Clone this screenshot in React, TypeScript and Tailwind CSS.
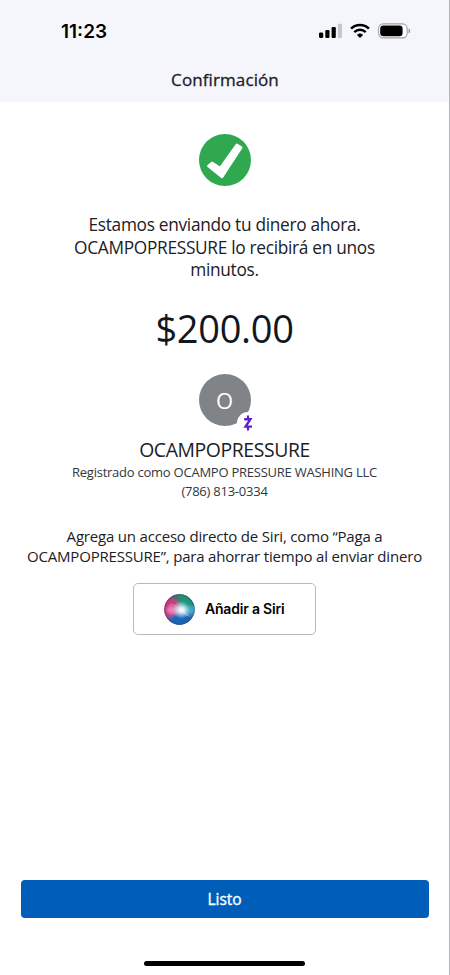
import React from 'react';

const StatusIcons: React.FC = () => (
    <div className="flex items-center pt-px">
        <svg width="24" height="16" viewBox="0 0 24 16">
            <rect x="0" y="9.6" width="4.2" height="5.4" rx="1.2" fill="#000" />
            <rect x="6.3" y="7" width="4.2" height="8" rx="1.2" fill="#000" />
            <rect x="12.6" y="4" width="4.2" height="11" rx="1.2" fill="#000" />
            <rect x="18.8" y="0.8" width="4.2" height="14.2" rx="1.2" fill="#c6c7ca" />
        </svg>
        <svg className="ml-[7px]" width="20" height="16" viewBox="0 0 20 16" fill="none" stroke="#000">
            <path d="M1.1 5.7a12.6 12.6 0 0 1 17.8 0" strokeWidth="2.6" />
            <path d="M4.3 9.1a8.2 8.2 0 0 1 11.4 0" strokeWidth="2.5" />
            <path d="M10 15L6.9 11.9a4.5 4.5 0 0 1 6.2 0z" fill="#000" stroke="none" />
        </svg>
        <svg className="ml-2" width="33" height="16" viewBox="0 0 33 16">
            <rect x="0.6" y="0.9" width="28.6" height="14" rx="4.6" fill="#fff" stroke="#a0a1a4" strokeWidth="1.1" />
            <rect x="2.2" y="2.5" width="22.4" height="10.8" rx="3.2" fill="#000" />
            <path d="M30.6 5.5c2 .6 2 4.2 0 4.8z" fill="#8e8f92" />
        </svg>
    </div>
);

const CheckBadge: React.FC = () => (
    <svg width="52" height="52" viewBox="0 0 52 52">
        <circle cx="26" cy="26" r="26" fill="#2fa84f" />
        <path
            d="M9.3 32L13 28.8L21.3 33.9L37.8 10.8L42.3 13.6L23 43z"
            fill="#fff"
            stroke="#fff"
            strokeWidth="2.4"
            strokeLinejoin="round"
        />
    </svg>
);

const ZelleMark: React.FC = () => (
    <svg width="20" height="20" viewBox="0 0 20 20" fill="none" stroke="#6420c8">
        <path d="M6.2 6.2H12.4L7.6 13.6H14" strokeWidth="2.4" />
        <path d="M10 2.6V6M10 14V17.6" strokeWidth="2.2" />
    </svg>
);

const SiriOrb: React.FC = () => (
    <svg width="31" height="31" viewBox="0 0 31 31">
        <defs>
            <radialGradient id="glow">
                <stop offset="0" stopColor="#fff" />
                <stop offset=".3" stopColor="#f1fbff" stopOpacity=".85" />
                <stop offset="1" stopColor="#bfe6ff" stopOpacity="0" />
            </radialGradient>
            <radialGradient id="rim">
                <stop offset=".85" stopColor="#283458" stopOpacity="0" />
                <stop offset="1" stopColor="#283458" stopOpacity=".4" />
            </radialGradient>
            <filter id="soft" x="-30%" y="-30%" width="160%" height="160%">
                <feGaussianBlur stdDeviation="1.6" />
            </filter>
            <clipPath id="orb">
                <circle cx="15.5" cy="15.5" r="15.2" />
            </clipPath>
        </defs>
        <g clipPath="url(#orb)">
            <rect width="31" height="31" fill="#4a5a94" />
            <g filter="url(#soft)">
                <path d="M6 -4H35V15L16 15z" fill="#1f957a" />
                <path d="M-4 5L10 2L16 14L10 23L-4 24z" fill="#d0387f" />
                <path d="M5 24L15 17L28 20L24 35H8z" fill="#1d66b8" />
                <path d="M17 13L35 12V21L20 20z" fill="#45aacb" />
                <ellipse cx="9" cy="16" rx="6" ry="4" fill="#e884b9" />
                <ellipse cx="12" cy="4" rx="5" ry="3" fill="#56656f" />
            </g>
            <path d="M5 12C10 8 13 13 17 16S25 23 27 22" fill="none" stroke="#fff" strokeOpacity=".25" />
            <circle cx="17.5" cy="16" r="9" fill="url(#glow)" />
            <path d="M18 16L24 22" stroke="#fff" strokeOpacity=".4" />
            <circle cx="15.5" cy="15.5" r="15.2" fill="url(#rim)" />
        </g>
    </svg>
);

const App: React.FC = () => (
    <div className="flex h-[975px] w-[450px] flex-col border-r border-[#b4b5b8] bg-white font-['Open_Sans',sans-serif] text-[#1b2026]">
        <header className="h-[102px] bg-[#f4f6fb]">
            <div className="flex h-[60px] items-center justify-between pr-[38px] pl-[61px]">
                <span className="pt-[5px] font-['Inter',sans-serif] text-[19px] font-semibold text-black">11:23</span>
                <StatusIcons />
            </div>
            <h1 className="pl-px text-center text-[17px] leading-[40px] tracking-[0.1px] [-webkit-text-stroke:0.3px]">
                Confirmación
            </h1>
        </header>

        <main className="flex flex-1 flex-col items-center text-center whitespace-nowrap">
            <div className="mt-8">
                <CheckBadge />
            </div>
            <p className="mt-7 text-[17.3px] leading-[22.7px] tracking-[-0.3px]">
                Estamos enviando tu dinero ahora.
                <br />
                OCAMPOPRESSURE lo recibirá en unos
                <br />
                minutos.
            </p>
            <div className="mt-[21px] text-[38px] leading-[50px] tracking-[-0.3px] text-[#10171e]">$200.00</div>

            <div className="relative mt-[21px] flex size-[52px] items-center justify-center rounded-full bg-[#808486] text-[22px] text-white">
                O
                <div className="absolute top-[38px] left-[38px] flex size-[22px] items-center justify-center rounded-full bg-white">
                    <ZelleMark />
                </div>
            </div>

            <h2 className="mt-[11px] text-[19.4px] leading-[26px] tracking-[-0.4px]">OCAMPOPRESSURE</h2>
            <p className="text-[13px] leading-[19px] tracking-[-0.24px] text-[#32373c]">
                Registrado como OCAMPO PRESSURE WASHING LLC
                <br />
                (786) 813-0334
            </p>

            <p className="mt-[25px] text-[15px] leading-[20px] tracking-[-0.19px]">
                Agrega un acceso directo de Siri, como “Paga a
                <br />
                OCAMPOPRESSURE”, para ahorrar tiempo al enviar dinero
            </p>
            <button className="mt-[17px] flex h-[52px] w-[183px] items-center rounded-[5px] border border-[#b9b9b9] pl-[30px] font-['Inter',sans-serif] text-[14px] font-semibold text-black">
                <SiriOrb />
                <span className="ml-2.5 pb-px tracking-[-0.2px]">Añadir a Siri</span>
            </button>

            <button className="mt-auto h-[38px] w-[408px] rounded-[4px] bg-[#005eb8] pt-0.5 text-[15.5px] text-white [-webkit-text-stroke:0.35px]">
                Listo
            </button>
            <div className="mt-[43px] mb-[9px] h-[5px] w-[161px] rounded-full bg-black" />
        </main>
    </div>
);

export default App;
